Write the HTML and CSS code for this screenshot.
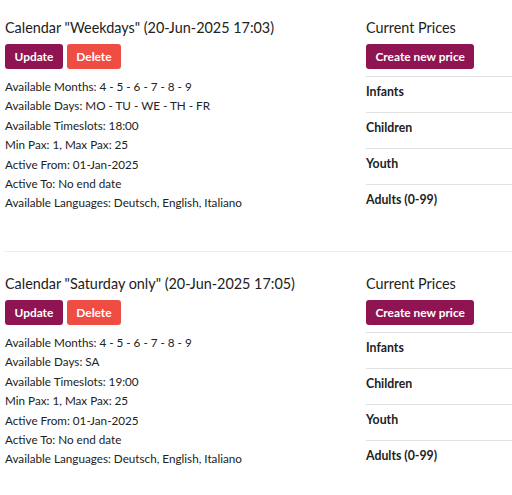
FILE: index.html
```html
<!DOCTYPE html>
<html>
<head>
<meta charset="utf-8">
<link rel="stylesheet" href="styles.css">
</head>
<body>
<div class="page">
  <section class="calendar">
    <div class="info">
      <h2 class="title">Calendar "Weekdays" (20-Jun-2025 17:03)</h2>
      <div class="actions">
        <button class="btn btn-primary">Update</button>
        <button class="btn btn-danger">Delete</button>
      </div>
      <ul class="details">
        <li>Available Months: 4 - 5 - 6 - 7 - 8 - 9</li>
        <li>Available Days: MO - TU - WE - TH - FR</li>
        <li>Available Timeslots: 18:00</li>
        <li>Min Pax: 1, Max Pax: 25</li>
        <li>Active From: 01-Jan-2025</li>
        <li>Active To: No end date</li>
        <li>Available Languages: Deutsch, English, Italiano</li>
      </ul>
    </div>
    <div class="prices">
      <h2 class="title">Current Prices</h2>
      <div class="actions">
        <button class="btn btn-primary">Create new price</button>
      </div>
      <ul class="price-list">
        <li>Infants</li>
        <li>Children</li>
        <li>Youth</li>
        <li>Adults (0-99)</li>
      </ul>
    </div>
  </section>
  <hr class="divider">
  <section class="calendar">
    <div class="info">
      <h2 class="title">Calendar "Saturday only" (20-Jun-2025 17:05)</h2>
      <div class="actions">
        <button class="btn btn-primary">Update</button>
        <button class="btn btn-danger">Delete</button>
      </div>
      <ul class="details">
        <li>Available Months: 4 - 5 - 6 - 7 - 8 - 9</li>
        <li>Available Days: SA</li>
        <li>Available Timeslots: 19:00</li>
        <li>Min Pax: 1, Max Pax: 25</li>
        <li>Active From: 01-Jan-2025</li>
        <li>Active To: No end date</li>
        <li>Available Languages: Deutsch, English, Italiano</li>
      </ul>
    </div>
    <div class="prices">
      <h2 class="title">Current Prices</h2>
      <div class="actions">
        <button class="btn btn-primary">Create new price</button>
      </div>
      <ul class="price-list">
        <li>Infants</li>
        <li>Children</li>
        <li>Youth</li>
        <li>Adults (0-99)</li>
      </ul>
    </div>
  </section>
</div>
</body>
</html>
```

FILE: styles.css
```css
html, body {
  margin: 0;
  padding: 0;
  background: #fff;
}
body {
  font-family: Lato, "Open Sans", sans-serif;
  color: #222;
  overflow: hidden;
}
.page {
  padding: 18px 0 0 5px;
}
.calendar {
  display: grid;
  grid-template-columns: 361px 146px;
}
.title {
  margin: 0;
  font-size: 14.4px;
  font-weight: 400;
  line-height: 20px;
  color: #222;
  white-space: nowrap;
}
.actions {
  display: flex;
  gap: 4px;
  margin-top: 6px;
}
.btn {
  font-family: inherit;
  font-size: 11.9px;
  font-weight: 700;
  color: #fff;
  border: none;
  border-radius: 3px;
  height: 25px;
  padding: 0 9.5px;
  line-height: 25px;
}
.btn-primary {
  background: #8e1552;
}
.btn-danger {
  background: #ef4d44;
}
.details {
  list-style: none;
  margin: 8px 0 0;
  padding: 0;
  font-size: 11.7px;
  line-height: 19.4px;
}
.price-list {
  list-style: none;
  margin: 7px 0 0;
  padding: 0;
}
.price-list li {
  border-top: 1px solid #e2e2e2;
  height: 36px;
  padding-top: 8px;
  box-sizing: border-box;
  font-size: 12.3px;
  font-weight: 700;
  line-height: 14px;
}
.divider {
  border: none;
  border-top: 1px solid #eee;
  margin: 31px 0 22px;
}
```
